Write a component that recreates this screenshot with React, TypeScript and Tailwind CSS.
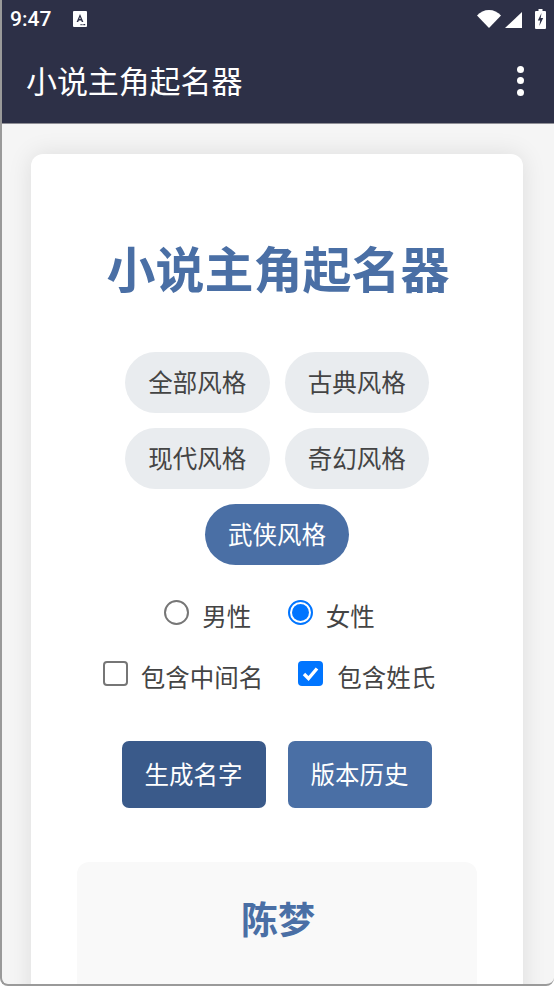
import React from 'react'

const font = '[font-family:"Noto_Sans_CJK_SC","Noto_Sans",sans-serif]'

const styles = [['全部风格', '古典风格'], ['现代风格', '奇幻风格'], ['武侠风格']]

function StatusBar() {
  return (
    <div className="flex items-center justify-between h-[38px] pl-[8px] pr-[8.500px]">
      <div className="flex items-center">
        <span className="text-[21px] font-medium text-white leading-none [font-family:Roboto,sans-serif]">9:47</span>
        <svg width="14" height="16" viewBox="0 0 14 16" className="ml-[22px]">
          <path d="M1 0h12a1 1 0 0 1 1 1v14a1 1 0 0 1-1 1H1a1 1 0 0 1-1-1V1a1 1 0 0 1 1-1z" fill="#fff" />
          <path d="M7 3 3.600 11h1.600l.6-1.600h2.400l.6 1.600h1.600L7 3zm-.7 5L7 5.900 7.700 8H6.300z" fill="#2d3047" />
          <path d="M7.500 13h1.200v1.200H7.500zM9.500 13h1.200v1.200H9.500zM11 13h1.200v1.200H11z" fill="#2d3047" />
        </svg>
      </div>
      <div className="flex items-center">
        <svg width="24" height="18" viewBox="0 0 24 18">
          <path d="M0 5.500C3 2 7.500 0 12 0s9 2 12 5.500L12 18z" fill="#fff" />
        </svg>
        <svg width="17" height="16" viewBox="0 0 17 16" className="ml-[4px] mt-[1px]">
          <path d="M17 0v16H0z" fill="#fff" />
        </svg>
        <svg width="11" height="20" viewBox="0 0 11 20" className="ml-[13px]">
          <path d="M3.500 0h4v2H10a1 1 0 0 1 1 1v16a1 1 0 0 1-1 1H1a1 1 0 0 1-1-1V3a1 1 0 0 1 1-1h2.500z" fill="#fff" />
          <path d="M6.500 4 2.800 11.500h2.400L4.300 17 8.200 9H5.700z" fill="#2d3047" />
        </svg>
      </div>
    </div>
  )
}

export default function App() {
  return (
    <div className={`w-[554px] h-[986px] overflow-hidden bg-white ${font}`}>
      <div className="h-full flex flex-col overflow-hidden rounded-b-[8px] border-l-2 border-b-2 border-[#9a9a9a] bg-[#f5f5f5]">
        {/* App bar */}
        <div className="bg-[#2d3047] h-[124px] shrink-0 border-b border-[#8f8f96]">
          <StatusBar />
          <div className="flex items-center justify-between h-[85px] pl-[24px] pr-[30px]">
            <h1 className="text-[31px] text-white leading-none tracking-[-0.1px] pb-[2px]">小说主角起名器</h1>
            <div className="flex flex-col gap-[4.500px]">
              <span className="w-[7px] h-[7px] rounded-full bg-white" />
              <span className="w-[7px] h-[7px] rounded-full bg-white" />
              <span className="w-[7px] h-[7px] rounded-full bg-white" />
            </div>
          </div>
        </div>

        {/* Card */}
        <div className="pt-[30px] pl-[29px]">
          <div className="w-[492px] bg-white rounded-[12px] shadow-[0_0_24px_rgba(0,0,0,0.1)] pt-[84px] h-[900px]">
            <h2 className="text-[49px] font-bold text-[#4a6fa5] text-center leading-[66px] -mt-[4px] ml-[2px]">小说主角起名器</h2>

            <div className="flex flex-col items-center gap-[15.200px] mt-[52px]">
              {styles.map((row, i) => (
                <div key={i} className="flex gap-[15px]">
                  {row.map((s) => (
                    <button
                      key={s}
                      className={`w-[144.500px] h-[60.800px] rounded-full text-[24.500px] leading-none ${s === '武侠风格' ? 'bg-[#4a6fa5] text-white' : 'bg-[#e9ecef] text-[#444]'}`}
                    >
                      {s}
                    </button>
                  ))}
                </div>
              ))}
            </div>

            {/* Gender */}
            <div className="flex justify-center items-center h-[30px] mt-[36.200px] -ml-[16px] text-[24.500px] text-[#444]">
              <span className="w-[25px] h-[25px] rounded-full border-2 border-[#767676] bg-white -mt-[6px] ml-[1px]" />
              <span className="ml-[13px] leading-none">男性</span>
              <span className="ml-[37px] w-[25px] h-[25px] rounded-full border-2 border-[#0075ff] bg-white flex items-center justify-center -mt-[6px]">
                <span className="w-[17px] h-[17px] rounded-full bg-[#0075ff]" />
              </span>
              <span className="ml-[12.500px] leading-none">女性</span>
            </div>

            {/* Options */}
            <div className="flex justify-center items-center h-[30px] mt-[31px] -ml-[17px] text-[24.500px] text-[#444]">
              <span className="w-[25px] h-[25px] rounded-[4px] border-2 border-[#767676] bg-white -mt-[7px] ml-[1px]" />
              <span className="ml-[13px] leading-none">包含中间名</span>
              <span className="ml-[35px] w-[25px] h-[25px] rounded-[4px] bg-[#0075ff] flex items-center justify-center -mt-[7px]">
                <svg width="17" height="15" viewBox="0 0 17 15">
                  <path d="M2 8l4.500 4.500L15 2.500" fill="none" stroke="#fff" strokeWidth="3.400" />
                </svg>
              </span>
              <span className="ml-[14px] leading-none">包含姓氏</span>
            </div>

            {/* Actions */}
            <div className="flex justify-center gap-[22px] mt-[49px] -ml-[1px]">
              <button className="w-[144px] h-[67px] rounded-[7px] bg-[#3a5a8a] text-white text-[24.500px] leading-none">生成名字</button>
              <button className="w-[144px] h-[67px] rounded-[7px] bg-[#4a6fa5] text-white text-[24.500px] leading-none">版本历史</button>
            </div>

            {/* Result */}
            <div className="w-[400px] h-[300px] mx-auto mt-[54px] rounded-[12px] bg-[#f9f9f9] pt-[31px]">
              <p className="text-[37px] font-bold text-[#4a6fa5] text-center leading-[50px] pl-[2px]">陈梦</p>
            </div>
          </div>
        </div>
      </div>
    </div>
  )
}
